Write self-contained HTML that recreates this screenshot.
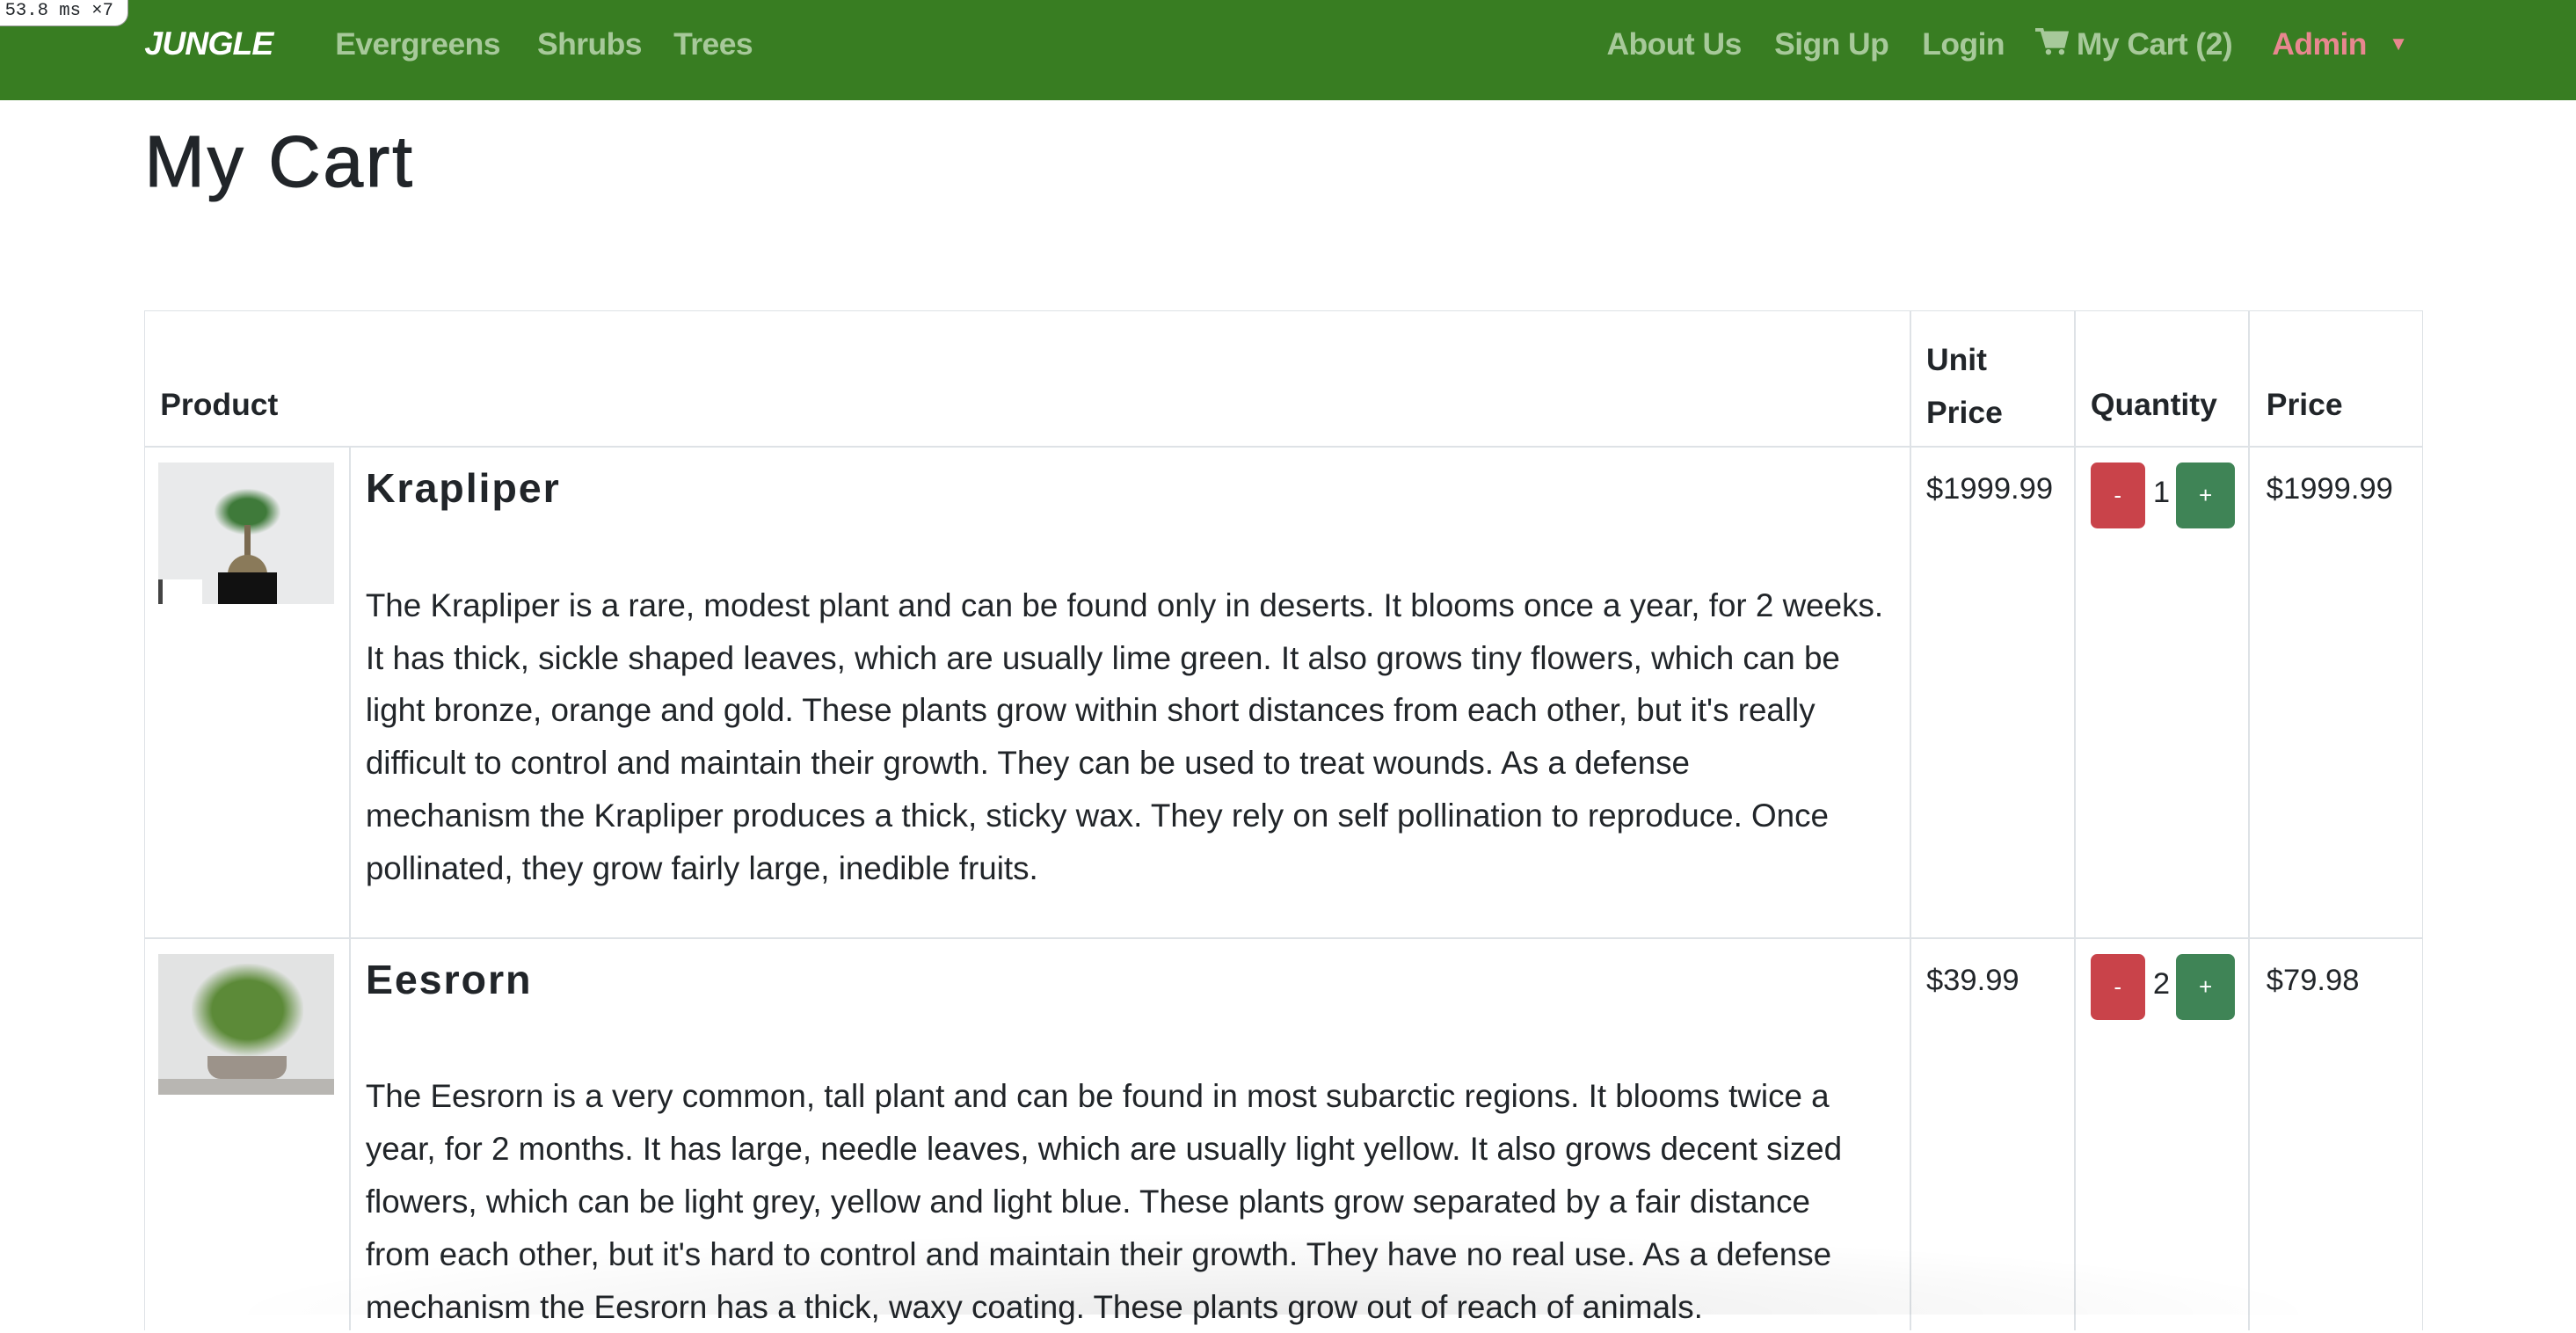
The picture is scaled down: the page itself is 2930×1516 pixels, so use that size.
<!DOCTYPE html>
<html><head><meta charset="utf-8">
<style>
html,body{margin:0;padding:0;}
body{width:1568px;height:791px;overflow:hidden;zoom:1.8686;background:#fff;font-family:"Liberation Sans",sans-serif;color:#212529;position:relative;}
.nav{position:absolute;left:0;top:0;width:1568px;height:61px;background:#387d22;}
.nav span{position:absolute;top:16px;font-size:19px;font-weight:bold;color:#a7c99a;white-space:nowrap;letter-spacing:-0.3px;}
.logo{position:absolute;left:88px;top:15px;font-size:20px;font-weight:900;font-style:italic;color:#fff;letter-spacing:-0.5px;}
h1{position:absolute;left:88px;top:74px;margin:0;font-size:44px;font-weight:normal;letter-spacing:1.5px;-webkit-text-stroke:0.6px #212529;}
.tb{position:absolute;left:88px;top:189px;width:1386px;height:620px;border:1px solid #dee2e6;border-bottom:none;}
.vl{position:absolute;top:0;bottom:0;width:1px;background:#dee2e6;}
.hl{position:absolute;left:0;right:0;height:1px;background:#dee2e6;}
.th{position:absolute;font-size:19px;font-weight:bold;}
.pn{position:absolute;left:134px;font-size:25px;font-weight:bold;letter-spacing:1px;}
.desc{position:absolute;left:134px;font-size:19.7px;line-height:32px;white-space:nowrap;}
.td{position:absolute;font-size:18.5px;}
.btn{position:absolute;width:33px;height:40px;border-radius:4px;color:#fff;font-size:14px;text-align:center;line-height:40px;}
.r{background:#c9434a;}.g{background:#3f8456;width:36px;}
.img{position:absolute;left:8px;width:107px;height:86px;overflow:hidden;}
.shade{position:absolute;left:0;top:720px;width:1568px;height:80px;background:radial-gradient(ellipse 640px 50px at 775px 80px,rgba(0,0,0,0.08),rgba(0,0,0,0) 100%);}
</style></head><body>
<div class="nav">
<div class="logo">JUNGLE</div>
<span style="left:204px">Evergreens</span>
<span style="left:327px">Shrubs</span>
<span style="left:410px">Trees</span>
<span style="left:978px">About Us</span>
<span style="left:1080px">Sign Up</span>
<span style="left:1170px">Login</span>
<span style="left:1239px"><svg width="20" height="17" viewBox="0 0 20 17" style="vertical-align:-1px"><path d="M0 1h4l3 10h10l2-8H5" fill="none" stroke="#a7c99a" stroke-width="2.2"/><rect x="6" y="3" width="12" height="7" fill="#a7c99a"/><circle cx="8" cy="14.5" r="1.7" fill="#a7c99a"/><circle cx="16" cy="14.5" r="1.7" fill="#a7c99a"/></svg> My Cart (2)</span>
<span style="left:1383px;color:#e8878f">Admin</span>
<span style="left:1454px;top:20px;color:#e8878f;font-size:12px">▼</span>
</div>
<div style="position:absolute;left:0;top:0;width:78px;height:16px;background:#fff;border-radius:0 0 8px 0;border:1px solid #999;border-top:none;border-left:none;font-family:'Liberation Mono',monospace;font-size:11px;line-height:14px;padding-left:3px;box-sizing:border-box;">53.8 ms ×7</div>
<h1>My Cart</h1>
<div class="tb">
<div class="vl" style="left:124px;top:83px"></div>
<div class="vl" style="left:1074px"></div>
<div class="vl" style="left:1174px"></div>
<div class="vl" style="left:1280px"></div>
<div class="hl" style="top:82px;height:1px"></div>
<div class="hl" style="top:381px"></div>
<div class="th" style="left:9px;top:46px">Product</div>
<div class="th" style="left:1084px;top:14px;line-height:32px">Unit<br>Price</div>
<div class="th" style="left:1184px;top:46px">Quantity</div>
<div class="th" style="left:1291px;top:46px">Price</div>

<div class="img" style="top:92px;background:#e9eaeb">
<div style="position:absolute;left:34px;top:16px;width:40px;height:28px;background:radial-gradient(ellipse at center,#3f7a3a 40%,rgba(60,120,60,0) 72%);"></div>
<div style="position:absolute;left:52px;top:38px;width:4px;height:20px;background:#7a6a50"></div>
<div style="position:absolute;left:42px;top:56px;width:24px;height:14px;border-radius:12px 12px 0 0;background:#8a7a5a"></div>
<div style="position:absolute;left:36px;top:67px;width:36px;height:19px;background:#111"></div>
<div style="position:absolute;left:0;top:71px;width:24px;height:15px;background:#fff;border-left:3px solid #444"></div>
</div>
<div class="pn" style="top:93px">Krapliper</div>
<div class="desc" style="top:163px">The Krapliper is a rare, modest plant and can be found only in deserts. It blooms once a year, for 2 weeks.<br>It has thick, sickle shaped leaves, which are usually lime green. It also grows tiny flowers, which can be<br>light bronze, orange and gold. These plants grow within short distances from each other, but it's really<br>difficult to control and maintain their growth. They can be used to treat wounds. As a defense<br>mechanism the Krapliper produces a thick, sticky wax. They rely on self pollination to reproduce. Once<br>pollinated, they grow fairly large, inedible fruits.</div>
<div class="td" style="left:1084px;top:98px">$1999.99</div>
<div class="btn r" style="left:1184px;top:92px">-</div>
<div class="td" style="left:1222px;top:100px">1</div>
<div class="btn g" style="left:1236px;top:92px">+</div>
<div class="td" style="left:1291px;top:98px">$1999.99</div>

<div class="img" style="top:391px;background:#e2e3e3">
<div style="position:absolute;left:20px;top:6px;width:68px;height:56px;background:radial-gradient(ellipse at center,#5c8a38 45%,rgba(90,130,60,0) 72%);"></div>
<div style="position:absolute;left:30px;top:62px;width:48px;height:14px;border-radius:0 0 8px 8px;background:#9c938a"></div>
<div style="position:absolute;left:0;top:76px;width:107px;height:10px;background:#b8b6b2"></div>
</div>
<div class="pn" style="top:392px">Eesrorn</div>
<div class="desc" style="top:462px">The Eesrorn is a very common, tall plant and can be found in most subarctic regions. It blooms twice a<br>year, for 2 months. It has large, needle leaves, which are usually light yellow. It also grows decent sized<br>flowers, which can be light grey, yellow and light blue. These plants grow separated by a fair distance<br>from each other, but it's hard to control and maintain their growth. They have no real use. As a defense<br>mechanism the Eesrorn has a thick, waxy coating. These plants grow out of reach of animals.</div>
<div class="td" style="left:1084px;top:397px">$39.99</div>
<div class="btn r" style="left:1184px;top:391px">-</div>
<div class="td" style="left:1222px;top:399px">2</div>
<div class="btn g" style="left:1236px;top:391px">+</div>
<div class="td" style="left:1291px;top:397px">$79.98</div>
</div>
<div class="shade"></div>
</body></html>
